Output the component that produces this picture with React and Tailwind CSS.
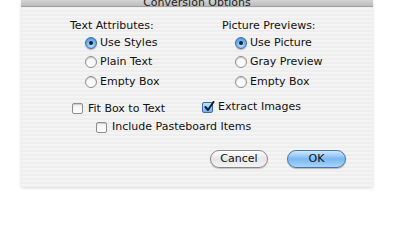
import React from "react";

function Radio({ on, label }) {
  return (
    <div className="flex items-center h-[19.5px]">
      {on ? (
        <span className="w-[12px] h-[12px] rounded-full border border-[#3c6fa8] bg-[radial-gradient(circle_at_50%_70%,#bfe3ff_0%,#6fb0ec_55%,#3e82cc_100%)] flex items-center justify-center shadow-[0_1px_1px_rgba(0,0,0,0.25)]">
          <span className="w-[4px] h-[4px] rounded-full bg-[#0f1e33]" />
        </span>
      ) : (
        <span className="w-[12px] h-[12px] rounded-full border border-[#8e8e8e] bg-[linear-gradient(#f6f6f6,#ffffff)] shadow-[inset_0_1px_1px_rgba(0,0,0,0.2)]" />
      )}
      <span className="ml-[3px]">{label}</span>
    </div>
  );
}

function Check({ on, label }) {
  return (
    <div className="flex items-center">
      {on ? (
        <span className="relative w-[11px] h-[11px] rounded-[2px] border border-[#3c6fa8] bg-[linear-gradient(#bfe3ff,#6fb0ec)]">
          <svg className="absolute left-[1px] -top-[2px]" width="11" height="11" viewBox="0 0 11 11">
            <path d="M1.5 6 L4 9 L9.5 1" fill="none" stroke="#0f1e33" strokeWidth="2" strokeLinecap="round" strokeLinejoin="round" />
          </svg>
        </span>
      ) : (
        <span className="w-[11px] h-[11px] rounded-[2px] border border-[#8e8e8e] bg-[linear-gradient(#f2f2f2,#ffffff)] shadow-[inset_0_1px_1px_rgba(0,0,0,0.15)]" />
      )}
      <span className="ml-[5px]">{label}</span>
    </div>
  );
}

export default function App() {
  return (
    <div className="w-[400px] h-[240px] bg-white overflow-hidden font-['DejaVu_Sans',sans-serif] text-[11px] text-[#111]">
      <div className="ml-[21px] w-[352px] h-[187px] flex flex-col shadow-[0_1px_3px_rgba(0,0,0,0.15)] bg-[repeating-linear-gradient(180deg,#f4f4f4_0px,#f4f4f4_2px,#eeeeee_2px,#eeeeee_4px)]">
        <div className="h-[7px] bg-[linear-gradient(#d4d4d4,#bcbcbc)] border-b border-[#a0a0a0] overflow-hidden flex justify-center items-end">
          <span className="text-[11px] leading-[13px] mb-[-3px] text-[#222]">Conversion Options</span>
        </div>
        <div className="flex pt-[12px]">
          <div className="ml-[49px] w-[152px]">
            <div className="h-[14px] leading-[14px]">Text Attributes:</div>
            <div className="ml-[15px]">
              <Radio on label="Use Styles" />
              <Radio label="Plain Text" />
              <Radio label="Empty Box" />
            </div>
          </div>
          <div className="w-[140px]">
            <div className="h-[14px] leading-[14px]">Picture Previews:</div>
            <div className="ml-[13px]">
              <Radio on label="Use Picture" />
              <Radio label="Gray Preview" />
              <Radio label="Empty Box" />
            </div>
          </div>
        </div>
        <div className="flex mt-[9px] h-[14px]">
          <div className="ml-[51px] w-[130px]">
            <Check label="Fit Box to Text" />
          </div>
          <Check on label="Extract Images" />
        </div>
        <div className="flex mt-[6px] ml-[75px] h-[14px]">
          <Check label="Include Pasteboard Items" />
        </div>
        <div className="flex mt-[15px] ml-[189px] gap-[19px]">
          <button className="w-[58px] h-[18px] rounded-full border border-[#8a8a8a] bg-[linear-gradient(#ffffff,#e6e6e6_50%,#f4f4f4)] text-[11px] leading-[16px] text-[#111] shadow-[0_1px_1px_rgba(0,0,0,0.2)]">Cancel</button>
          <button className="w-[59px] h-[18px] rounded-full border border-[#4a74a8] bg-[linear-gradient(#cfe8ff,#7ab8f0_50%,#a6d4fb)] text-[11px] leading-[16px] text-[#111] shadow-[0_1px_1px_rgba(0,0,0,0.25)]">OK</button>
        </div>
      </div>
    </div>
  );
}
